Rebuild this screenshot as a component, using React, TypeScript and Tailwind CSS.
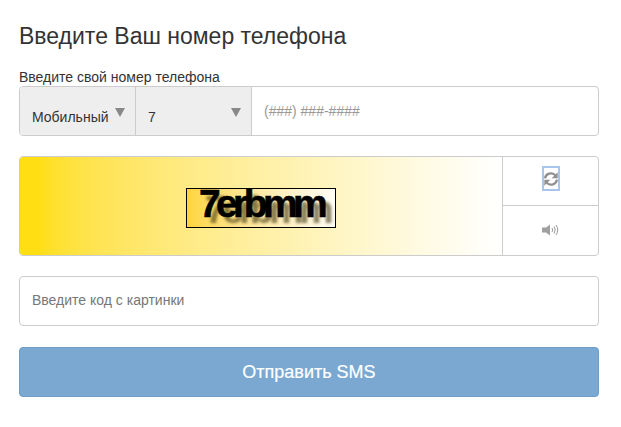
import React from "react";

function Triangle() {
  return <span className="block w-0 h-0 border-l-[5px] border-r-[5px] border-t-[9px] border-l-transparent border-r-transparent border-t-[#888888]" />;
}

export default function App() {
  return (
    <div className="w-[621px] h-[427px] bg-white px-[19px] pt-[20px] font-['Liberation_Sans',Arial,sans-serif] text-[#333333] overflow-hidden">
      <h3 className="text-[23px] leading-[32px] font-normal text-[#333333]">Введите Ваш номер телефона</h3>
      <div className="mt-[17px] text-[14px] leading-[17px] text-[#333333]">Введите свой номер телефона</div>
      <div className="flex w-[580px] h-[50px] border border-[#cccccc] rounded-[4px] overflow-hidden">
        <div className="w-[116px] bg-[#eeeeee] border-r border-[#cccccc] flex pl-[12px] pr-[10px] pt-[15px] justify-between">
          <span className="text-[14px] leading-[30px] text-[#333333]">Мобильный</span>
          <span className="mt-[6px]"><Triangle /></span>
        </div>
        <div className="w-[115px] bg-[#eeeeee] flex pl-[12px] pr-[10px] pt-[15px] justify-between">
          <span className="text-[14px] leading-[30px] text-[#333333]">7</span>
          <span className="mt-[6px]"><Triangle /></span>
        </div>
        <div className="flex-1 border-l border-[#cccccc] flex items-center pl-[12px] text-[14px] text-[#999999]">(###) ###-####</div>
      </div>
      <div className="mt-[20px] flex w-[580px] h-[100px] border border-[#cccccc] rounded-[4px] overflow-hidden">
        <div className="w-[482px] bg-gradient-to-r from-[#ffdf14] from-[4%] to-white flex items-center justify-center">
          <div className="w-[150px] h-[40px] mt-[4px] shrink-0 border border-black flex items-start justify-center bg-gradient-to-r from-[#ffd53a] to-[#fffdf5]">
            <span className="text-[39px] leading-[30px] font-bold text-black tracking-[-4.6px] [-webkit-text-stroke:0.6px_black] [text-shadow:6px_6px_3px_rgba(60,50,10,0.6)]">7erbmm</span>
          </div>
        </div>
        <div className="flex-1 border-l border-[#cccccc] flex flex-col">
          <div className="h-[49px] border-b border-[#cccccc] flex items-center justify-center">
            <div className="w-[18px] h-[25px] mb-[5px] bg-white border-2 border-[#a8c5ee] flex items-center justify-center">
              <svg className="shrink-0" width="16" height="16" viewBox="0 0 24 24" fill="none" stroke="#909090" strokeWidth="3.500">
                <path d="M3 11a9 9 0 0 1 15-5l2 2" />
                <path d="M22 2v9h-9z" fill="#909090" stroke="none" />
                <path d="M21 13a9 9 0 0 1-15 5l-2-2" />
                <path d="M2 22v-9h9z" fill="#909090" stroke="none" />
              </svg>
            </div>
          </div>
          <div className="flex-1 flex items-center justify-center pb-[2px]">
            <svg width="17" height="12" viewBox="0 0 17 12" fill="none">
              <path d="M0 3.500h4l4-3v11l-4-3H0z" fill="#a0a0a0" />
              <path d="M10 4q1.500 2 0 4M12 2.500q2.500 3.500 0 7M14 1q3.500 5 0 10" stroke="#999999" strokeWidth="1" />
            </svg>
          </div>
        </div>
      </div>
      <div className="mt-[20px] w-[580px] h-[50px] border border-[#cccccc] rounded-[4px] flex items-center pl-[12px] pb-[1px] text-[14px] text-[#777777]">Введите код с картинки</div>
      <button className="mt-[21px] w-[580px] h-[50px] bg-[#7aa8d1] border border-[#6f9dc6] rounded-[4px] text-white text-[18px] [-webkit-text-stroke:0.2px_white] flex items-center justify-center">Отправить SMS</button>
    </div>
  );
}
